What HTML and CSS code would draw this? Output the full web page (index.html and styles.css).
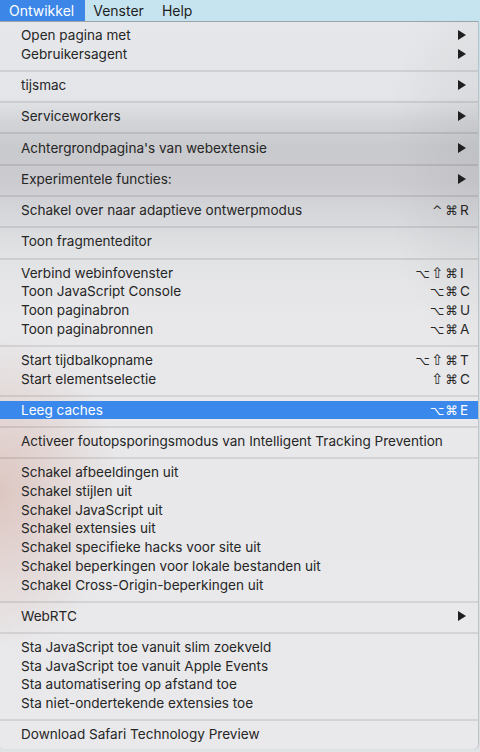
FILE: index.html
```html
<!DOCTYPE html>
<html lang="nl">
<head>
<meta charset="utf-8">
<title>Ontwikkel</title>
<link rel="stylesheet" href="styles.css">
</head>
<body>
<div class="menubar">
  <span class="bar-item active">Ontwikkel</span>
  <span class="bar-item">Venster</span>
  <span class="bar-item">Help</span>
</div>
<div class="menu">
  <div class="item"><span class="label">Open pagina met</span><svg class="arrow" viewBox="0 0 8 10"><polygon points="0,0 8,5 0,10"/></svg></div>
  <div class="item"><span class="label">Gebruikersagent</span><svg class="arrow" viewBox="0 0 8 10"><polygon points="0,0 8,5 0,10"/></svg></div>
  <div class="sep"></div>
  <div class="item"><span class="label">tijsmac</span><svg class="arrow" viewBox="0 0 8 10"><polygon points="0,0 8,5 0,10"/></svg></div>
  <div class="sep"></div>
  <div class="item"><span class="label">Serviceworkers</span><svg class="arrow" viewBox="0 0 8 10"><polygon points="0,0 8,5 0,10"/></svg></div>
  <div class="sep"></div>
  <div class="item"><span class="label">Achtergrondpagina's van webextensie</span><svg class="arrow" viewBox="0 0 8 10"><polygon points="0,0 8,5 0,10"/></svg></div>
  <div class="sep"></div>
  <div class="item"><span class="label">Experimentele functies:</span><svg class="arrow" viewBox="0 0 8 10"><polygon points="0,0 8,5 0,10"/></svg></div>
  <div class="sep"></div>
  <div class="item"><span class="label">Schakel over naar adaptieve ontwerpmodus</span><span class="sc"><span class="m">^</span><span class="m">⌘</span><span class="key">R</span></span></div>
  <div class="sep"></div>
  <div class="item"><span class="label">Toon fragmenteditor</span></div>
  <div class="sep"></div>
  <div class="item"><span class="label">Verbind webinfovenster</span><span class="sc"><span class="m">⌥</span><span class="m shift">⇧</span><span class="m">⌘</span><span class="key">I</span></span></div>
  <div class="item"><span class="label">Toon JavaScript Console</span><span class="sc"><span class="m">⌥</span><span class="m">⌘</span><span class="key">C</span></span></div>
  <div class="item"><span class="label">Toon paginabron</span><span class="sc"><span class="m">⌥</span><span class="m">⌘</span><span class="key">U</span></span></div>
  <div class="item"><span class="label">Toon paginabronnen</span><span class="sc"><span class="m">⌥</span><span class="m">⌘</span><span class="key">A</span></span></div>
  <div class="sep"></div>
  <div class="item"><span class="label">Start tijdbalkopname</span><span class="sc"><span class="m">⌥</span><span class="m shift">⇧</span><span class="m">⌘</span><span class="key">T</span></span></div>
  <div class="item"><span class="label">Start elementselectie</span><span class="sc"><span class="m shift">⇧</span><span class="m">⌘</span><span class="key">C</span></span></div>
  <div class="sep"></div>
  <div class="item selected"><span class="label">Leeg caches</span><span class="sc"><span class="m">⌥</span><span class="m">⌘</span><span class="key">E</span></span></div>
  <div class="sep"></div>
  <div class="item"><span class="label">Activeer foutopsporingsmodus van Intelligent Tracking Prevention</span></div>
  <div class="sep"></div>
  <div class="item"><span class="label">Schakel afbeeldingen uit</span></div>
  <div class="item"><span class="label">Schakel stijlen uit</span></div>
  <div class="item"><span class="label">Schakel JavaScript uit</span></div>
  <div class="item"><span class="label">Schakel extensies uit</span></div>
  <div class="item"><span class="label">Schakel specifieke hacks voor site uit</span></div>
  <div class="item"><span class="label">Schakel beperkingen voor lokale bestanden uit</span></div>
  <div class="item"><span class="label">Schakel Cross-Origin-beperkingen uit</span></div>
  <div class="sep"></div>
  <div class="item"><span class="label">WebRTC</span><svg class="arrow" viewBox="0 0 8 10"><polygon points="0,0 8,5 0,10"/></svg></div>
  <div class="sep"></div>
  <div class="item"><span class="label">Sta JavaScript toe vanuit slim zoekveld</span></div>
  <div class="item"><span class="label">Sta JavaScript toe vanuit Apple Events</span></div>
  <div class="item"><span class="label">Sta automatisering op afstand toe</span></div>
  <div class="item"><span class="label">Sta niet-ondertekende extensies toe</span></div>
  <div class="sep"></div>
  <div class="item"><span class="label">Download Safari Technology Preview</span></div>
</div>
</body>
</html>
```

FILE: styles.css
```css
html, body {
  margin: 0;
  padding: 0;
}
body {
  width: 480px;
  height: 752px;
  overflow: hidden;
  background: linear-gradient(to bottom, #c6e3ef 0, #d9e0e4 120px, #dfe3e6 100%);
  font-family: Inter, "Noto Sans", "DejaVu Sans", sans-serif;
  font-size: 13.55px;
  color: #262626;
}
.menubar {
  display: flex;
  height: 21px;
  background: #c6e4f0;
  align-items: stretch;
}
.bar-item {
  display: flex;
  align-items: center;
  padding: 0 10px 0 8px;
  font-size: 14px;
  color: #1e1e1e;
}
.bar-item.active {
  background: #3b86e7;
  color: #fff;
  padding: 0 11px 0 9px;
}
.menu {
  width: 478px;
  box-sizing: border-box;
  border-top: 1px solid #9da5aa;
  border-radius: 0 0 5px 5px;
  padding: 3.7px 0 5.6px;
  background:
    radial-gradient(ellipse 120px 160px at 0 470px, rgba(214, 176, 166, 0.6), rgba(214, 176, 166, 0) 100%),
    radial-gradient(ellipse 90px 200px at 478px 140px, rgba(150, 150, 155, 0.18), rgba(150, 150, 155, 0) 100%),
    linear-gradient(to bottom, #e6e7ea 0, #e4e5e8 75px, #d3d4d7 100px, #c9cacd 125px, #ccccd0 160px, #d7d8db 195px, #e1e2e4 230px, #e8e8ea 290px, #e9e9eb 100%);
  box-shadow: 1px 0 1px rgba(0, 0, 0, 0.15);
}
.item {
  height: 18.7px;
  display: flex;
  align-items: center;
  padding: 0 8px 0 21px;
  white-space: nowrap;
}
.item .label {
  flex: 1;
}
.item.selected {
  background: #3b88ec;
  color: #fff;
}
.sep {
  height: 2px;
  margin: 6.9px 0 3.7px;
  background: rgba(0, 0, 0, 0.09);
}
.arrow {
  width: 8px;
  height: 10px;
  margin-right: 4px;
  fill: #1f1f1f;
}
.sc {
  display: flex;
  align-items: baseline;
}
.m {
  width: 14.5px;
  text-align: center;
  font-family: "DejaVu Sans", sans-serif;
  font-size: 12.5px;
}
.m.shift {
  font-size: 14.5px;
}
.key {
  width: 10px;
  padding-left: 1px;
  text-align: left;
}
```
